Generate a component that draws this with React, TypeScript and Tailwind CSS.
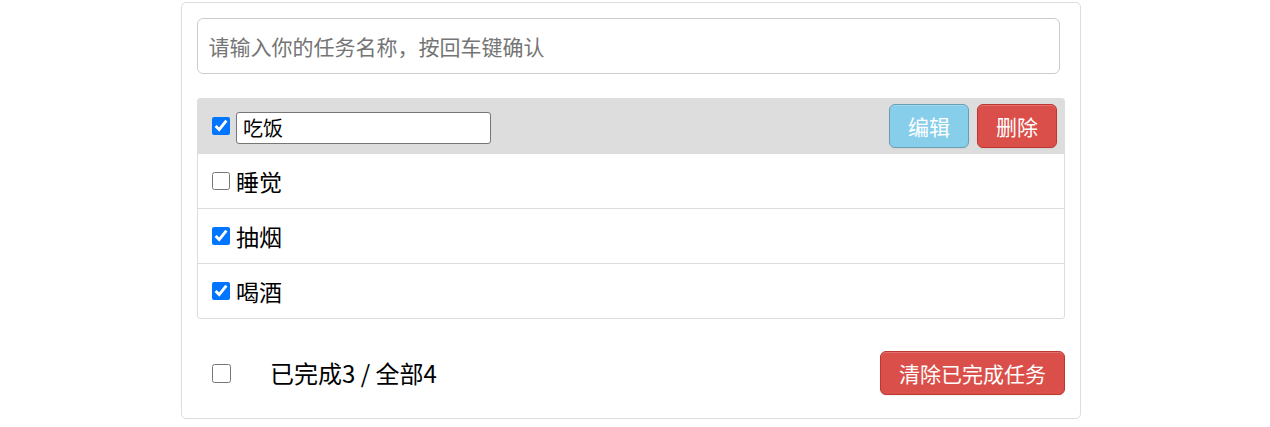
import { useState } from 'react';

type Todo = { id: string; title: string; done: boolean };

const initialTodos: Todo[] = [
  { id: '001', title: '吃饭', done: true },
  { id: '002', title: '睡觉', done: false },
  { id: '003', title: '抽烟', done: true },
  { id: '004', title: '喝酒', done: true },
];

const btnBase =
  'h-[44px] px-[18px] text-[21px] leading-[30px] text-white rounded-[6px] border shadow-[inset_0_1px_0_rgba(255,255,255,0.2),0_1px_2px_rgba(0,0,0,0.05)]';

function TodoItem({ todo, editing, onToggle }: { todo: Todo; editing: boolean; onToggle: (id: string) => void }) {
  return (
    <li
      className={`h-[55px] last:h-[54px] flex items-center pl-[14px] pr-[7px] border-b border-[#ddd] last:border-b-0 ${
        editing ? 'bg-[#ddd]' : ''
      }`}
    >
      <input
        type="checkbox"
        checked={todo.done}
        onChange={() => onToggle(todo.id)}
        className="w-[18px] h-[18px] m-0 mr-[6px] accent-[#0075ff]"
      />
      {editing ? (
        <input
          type="text"
          defaultValue={todo.title}
          className="mt-[3px] w-[255px] h-[32px] px-[6px] text-[20px] leading-none text-black bg-white border border-[#767676] rounded-[3px] outline-none"
        />
      ) : (
        <span className="text-[23px] text-black">{todo.title}</span>
      )}
      {editing && (
        <div className="ml-auto flex gap-[8px]">
          <button className={`${btnBase} bg-[#87ceeb] border-[rgb(103,159,180)]`}>编辑</button>
          <button className={`${btnBase} bg-[#da4f49] border-[#bd362f]`}>删除</button>
        </div>
      )}
    </li>
  );
}

export default function App() {
  const [todos, setTodos] = useState(initialTodos);
  const doneCount = todos.filter((t) => t.done).length;

  const toggle = (id: string) =>
    setTodos((list) => list.map((t) => (t.id === id ? { ...t, done: !t.done } : t)));

  return (
    <div className="font-['Noto_Sans_CJK_SC',sans-serif] bg-white min-h-[427px] pt-[2px]">
      <div className="ml-[181px] w-[900px] border border-[#ddd] rounded-[5px] p-[15px]">
        <input
          type="text"
          placeholder="请输入你的任务名称，按回车键确认"
          className="block w-[863px] h-[56px] px-[10.5px] text-[21px] border border-[#ccc] rounded-[6px] outline-none placeholder:text-[#757575]"
        />

        <ul className="mt-[24px] border border-[#ddd] rounded-[3px]">
          {todos.map((t, i) => (
            <TodoItem key={t.id} todo={t} editing={i === 0} onToggle={toggle} />
          ))}
        </ul>

        <div className="mt-[24px] h-[60px] flex items-center pl-[15px]">
          <input
            type="checkbox"
            checked={doneCount === todos.length && todos.length > 0}
            onChange={() => {}}
            className="w-[19px] h-[19px] m-0 accent-[#0075ff]"
          />
          <span className="ml-[39px] text-[24px] text-black">
            已完成{doneCount} / 全部{todos.length}
          </span>
          <button className={`${btnBase} ml-auto bg-[#da4f49] border-[#bd362f]`}>清除已完成任务</button>
        </div>
      </div>
    </div>
  );
}
